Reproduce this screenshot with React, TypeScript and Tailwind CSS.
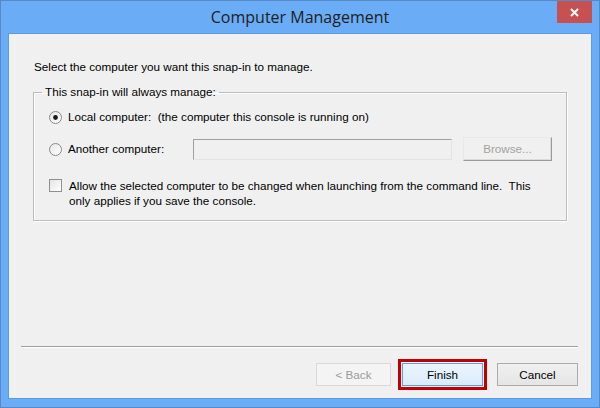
import React from "react";

const Radio = ({ checked }: { checked?: boolean }) => (
  <svg width="13" height="13" viewBox="0 0 13 13" className="shrink-0">
    <defs>
      <linearGradient id={checked ? "rg1" : "rg2"} x1="0" y1="0" x2="1" y2="1">
        <stop offset="0" stopColor="#e6e6e6" />
        <stop offset="1" stopColor="#ffffff" />
      </linearGradient>
    </defs>
    <circle cx="6.5" cy="6.5" r="6" fill={`url(#${checked ? "rg1" : "rg2"})`} stroke="#8a8a8a" strokeWidth="1" />
    {checked && <circle cx="6.5" cy="6.5" r="2.4" fill="#1a1a1a" />}
  </svg>
);

export default function App() {
  const body = { fontFamily: '"Liberation Sans", Arial, sans-serif' };
  return (
    <div className="w-[600px] h-[408px] bg-[#6aacf6] border border-[#5589c7] flex flex-col overflow-hidden">
      <div className="relative h-[32px] shrink-0 flex items-center justify-center">
        <span
          className="text-[16px] text-[#1e1e1e] leading-none"
          style={{ fontFamily: '"Open Sans", "Noto Sans", sans-serif' }}
        >
          Computer Management
        </span>
        <div className="absolute right-[7px] top-0 w-[35px] h-[22px] bg-[#c75050] flex items-center justify-center">
          <svg width="9" height="9" viewBox="0 0 9 9">
            <path d="M1 1 L8 8 M8 1 L1 8" stroke="#ffffff" strokeWidth="2" />
          </svg>
        </div>
      </div>
      <div
        className="flex-1 mx-[7px] mb-[8px] bg-[#f0f0f0] border border-[#5d9be2] flex flex-col text-[11.7px] text-black"
        style={body}
      >
        <div className="pl-[25px] pt-[26px] leading-[14px]">Select the computer you want this snap-in to manage.</div>
        <fieldset className="mt-[11px] mx-[24px] border border-[#bcbcbc] shadow-[inset_1px_1px_0_#ffffff,1px_1px_0_#ffffff] pl-[15px] pr-[14px] pb-[12px]">
          <legend className="-ml-[7px] px-[3px] leading-[14px]">This snap-in will always manage:</legend>
          <div className="mt-[8px] h-[20px] flex items-center">
            <Radio checked />
            <span className="ml-[6px] leading-[14px] whitespace-pre">Local computer:  (the computer this console is running on)</span>
          </div>
          <div className="mt-[10px] h-[24px] flex items-center">
            <Radio />
            <span className="ml-[6px] w-[125px] leading-[14px]">Another computer:</span>
            <div className="w-[259px] h-[21px] border border-t-[#a0a0a0] border-l-[#a0a0a0] border-r-[#e3e3e3] border-b-[#e3e3e3] bg-[#f0f0f0]" />
            <div className="ml-[11px] w-[89px] h-[24px] border border-t-[#e8e8e8] border-l-[#e8e8e8] border-r-[#9a9a9a] border-b-[#9a9a9a] shadow-[inset_-1px_-1px_0_#dcdcdc] flex items-center justify-center text-[#a3a3a3]">
              Browse...
            </div>
          </div>
          <div className="mt-[17px] flex items-start">
            <div className="mt-[1px] w-[13px] h-[13px] shrink-0 border border-[#8e8f8f] bg-gradient-to-br from-[#e4e4e4] to-[#ffffff]" />
            <span className="ml-[7px] leading-[15px]">
              Allow the selected computer to be changed when launching from the command line.&nbsp; This
              <br />
              only applies if you save the console.
            </span>
          </div>
        </fieldset>
        <div className="flex-1" />
        <div className="ml-[12px] mr-[13px] h-[2px] border-t border-t-[#a0a0a0] border-b border-b-[#ffffff]" />
        <div className="mt-[11px] mb-[8px] pr-[13px] flex items-center justify-end">
          <div className="w-[75px] h-[23px] border border-[#d9d9d9] bg-[#f4f4f4] flex items-center justify-center text-[#9a9a9a]">
            &lt; Back
          </div>
          <div className="ml-[7px] w-[89px] h-[31px] border-[3px] border-[#c00000] p-[1px] flex">
            <div className="flex-1 border border-[#56a4ec] bg-gradient-to-b from-[#eaf4fd] to-[#dcecfc] flex items-center justify-center">
              Finish
            </div>
          </div>
          <div className="ml-[10px] w-[81px] h-[23px] border border-[#acacac] bg-gradient-to-b from-[#f0f0f0] to-[#e5e5e5] flex items-center justify-center">
            Cancel
          </div>
        </div>
      </div>
    </div>
  );
}
